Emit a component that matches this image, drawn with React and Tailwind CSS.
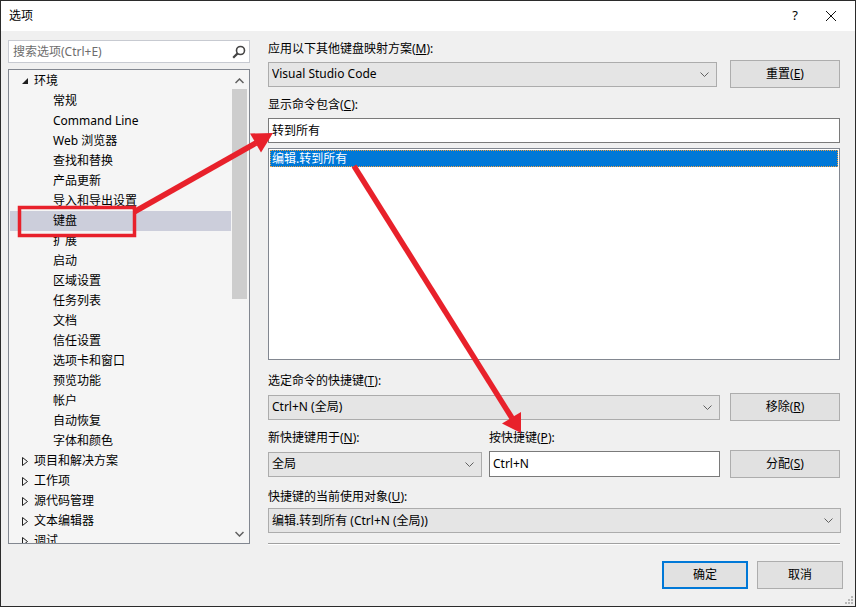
import React from "react";

const treeItems = [
  { label: "环境", level: 0, open: true },
  { label: "常规", level: 1 },
  { label: "Command Line", level: 1 },
  { label: "Web 浏览器", level: 1 },
  { label: "查找和替换", level: 1 },
  { label: "产品更新", level: 1 },
  { label: "导入和导出设置", level: 1 },
  { label: "键盘", level: 1, selected: true },
  { label: "扩展", level: 1 },
  { label: "启动", level: 1 },
  { label: "区域设置", level: 1 },
  { label: "任务列表", level: 1 },
  { label: "文档", level: 1 },
  { label: "信任设置", level: 1 },
  { label: "选项卡和窗口", level: 1 },
  { label: "预览功能", level: 1 },
  { label: "帐户", level: 1 },
  { label: "自动恢复", level: 1 },
  { label: "字体和颜色", level: 1 },
  { label: "项目和解决方案", level: 0 },
  { label: "工作项", level: 0 },
  { label: "源代码管理", level: 0 },
  { label: "文本编辑器", level: 0 },
  { label: "调试", level: 0 },
];

const Chevron = () => (
  <svg width="9" height="5" viewBox="0 0 9 5" className="shrink-0">
    <polyline points="0.5,0.5 4.5,4.5 8.5,0.5" fill="none" stroke="#606060" strokeWidth="1" />
  </svg>
);

const Combo = ({ text, className }) => (
  <div className={`h-[25px] bg-[#e5e5e5] border border-[#acacac] flex items-center pl-[3px] pr-[7px] ${className}`}>
    <span className="flex-1 truncate">{text}</span>
    <Chevron />
  </div>
);

const Button = ({ children, className = "" }) => (
  <div className={`h-[28px] w-[110px] bg-[#e1e1e1] border border-[#adadad] flex items-center justify-center ${className}`}>
    {children}
  </div>
);

const Label = ({ children, className = "" }) => (
  <div className={`h-4 leading-4 ${className}`}>{children}</div>
);

export default function App() {
  return (
    <div
      className="relative w-[856px] h-[607px] bg-[#f0f0f0] border border-[#2b2b2b] flex flex-col text-[12px] text-black overflow-hidden"
      style={{ fontFamily: '"Noto Sans", "Noto Sans CJK SC", sans-serif' }}
    >
      {/* Title bar */}
      <div className="h-[30px] bg-white flex items-center pl-[8px] shrink-0">
        <span className="flex-1 text-[12px]">选项</span>
        <span className="w-[30px] text-center text-[13px] mr-[15px]">?</span>
        <svg width="12" height="12" viewBox="0 0 12 12" className="mr-[18px]">
          <path d="M1 1 L11 11 M11 1 L1 11" stroke="#111" strokeWidth="1" />
        </svg>
      </div>

      <div className="flex flex-1">
        {/* Left */}
        <div className="pl-[7px] pt-[9px] w-[250px] shrink-0">
          <div className="w-[242px] h-[23px] bg-white border border-[#c7cad1] flex items-center pl-[4px] pr-[3px]">
            <span className="flex-1 text-[#6d6d6d]">搜索选项(Ctrl+E)</span>
            <svg width="14" height="14" viewBox="0 0 14 14">
              <circle cx="8.5" cy="5.5" r="4" fill="none" stroke="#444" strokeWidth="1.6" />
              <path d="M5.6 8.4 L1.2 12.8" stroke="#444" strokeWidth="2.2" />
            </svg>
          </div>
          <div className="mt-[6px] w-[242px] h-[475px] bg-[#f5f5f5] border border-[#828790] flex">
            <div className="flex-1 pt-px overflow-hidden">
              {treeItems.map((it) => (
                <div
                  key={it.label}
                  className={`h-5 flex items-center ${it.selected ? "bg-[#cccedb] ml-px" : ""}`}
                >
                  {it.level === 0 ? (
                    <>
                      <span className="w-[25px] flex justify-end pr-[6px]">
                        {it.open ? (
                          <svg width="6" height="6" viewBox="0 0 6 6">
                            <polygon points="6,0 6,6 0,6" fill="#1e1e1e" />
                          </svg>
                        ) : (
                          <svg width="6" height="9" viewBox="0 0 6 9">
                            <polygon points="0.5,0.5 5.5,4.5 0.5,8.5" fill="none" stroke="#1e1e1e" strokeWidth="1" />
                          </svg>
                        )}
                      </span>
                      <span>{it.label}</span>
                    </>
                  ) : (
                    <span className={it.selected ? "pl-[43px]" : "pl-[44px]"}>{it.label}</span>
                  )}
                </div>
              ))}
            </div>
            <div className="w-[17px] mr-px flex flex-col items-center">
              <svg width="9" height="6" viewBox="0 0 9 6" className="mt-[8px]">
                <polyline points="0.5,5 4.5,1 8.5,5" fill="none" stroke="#606060" strokeWidth="1.5" />
              </svg>
              <div className="mt-[5px] w-[15px] h-[210px] bg-[#cdcdcd]" />
              <div className="flex-1" />
              <svg width="9" height="6" viewBox="0 0 9 6" className="mb-[6px]">
                <polyline points="0.5,1 4.5,5 8.5,1" fill="none" stroke="#606060" strokeWidth="1.5" />
              </svg>
            </div>
          </div>
        </div>

        {/* Right */}
        <div className="ml-[17px] pt-[10px] w-[572px]">
          <Label>
            应用以下其他键盘映射方案(<u>M</u>):
          </Label>
          <div className="mt-[3px] h-[28px] flex items-center">
            <Combo text="Visual Studio Code" className="w-[449px]" />
            <Button className="ml-auto">
              重置(<u>E</u>)
            </Button>
          </div>

          <Label className="mt-[9px]">
            显示命令包含(<u>C</u>):
          </Label>
          <div className="mt-[5px] h-[25px] bg-white border border-[#7a7a7a] flex items-center pl-[3px]">
            转到所有
          </div>

          <div className="mt-[5px] h-[212px] bg-white border border-[#828790] p-px">
            <div className="h-[17px] bg-[#0078d7] text-white flex items-center pl-[2px] outline outline-1 outline-dotted outline-[#f0a040] -outline-offset-1">
              编辑.转到所有
            </div>
          </div>

          <Label className="mt-[13px]">
            选定命令的快捷键(<u>T</u>):
          </Label>
          <div className="mt-[4px] h-[28px] flex items-center">
            <Combo text="Ctrl+N (全局)" className="w-[452px]" />
            <Button className="ml-auto">
              移除(<u>R</u>)
            </Button>
          </div>

          <div className="mt-[9px] flex">
            <Label className="w-[221px]">
              新快捷键用于(<u>N</u>):
            </Label>
            <Label>
              按快捷键(<u>P</u>):
            </Label>
          </div>
          <div className="mt-[4px] h-[28px] flex items-center">
            <Combo text="全局" className="w-[214px]" />
            <div className="ml-[7px] w-[231px] h-[26px] bg-white border border-[#7a7a7a] flex items-center pl-[3px]">
              Ctrl+N
            </div>
            <Button className="ml-auto">
              分配(<u>S</u>)
            </Button>
          </div>

          <Label className="mt-[11px]">
            快捷键的当前使用对象(<u>U</u>):
          </Label>
          <Combo text="编辑.转到所有 (Ctrl+N (全局))" className="mt-[3px] w-[573px]" />

          <div className="mt-[10px] h-px bg-[#a0a0a0]" />
          <div className="h-px bg-white" />

          <div className="mt-[16px] flex justify-end gap-[9px] -mr-[3px]">
            <div className="w-[86px] h-[28px] bg-[#e1e1e1] border-2 border-[#0078d7] flex items-center justify-center">
              确定
            </div>
            <div className="w-[86px] h-[28px] bg-[#e1e1e1] border border-[#adadad] flex items-center justify-center">
              取消
            </div>
          </div>
        </div>
      </div>

      {/* resize grip */}
      <svg width="10" height="10" viewBox="0 0 10 10" className="absolute right-[2px] bottom-[2px]">
        {[[8, 0], [8, 3], [5, 3], [8, 6], [5, 6], [2, 6]].map(([x, y]) => (
          <rect key={`${x}-${y}`} x={x} y={y + 2} width="2" height="2" fill="#b8b8b8" />
        ))}
      </svg>

      {/* red annotation */}
      <svg width="856" height="607" viewBox="0 0 856 607" className="absolute left-[-1px] top-[-1px] pointer-events-none">
        <rect x="19.5" y="207.5" width="115" height="28" fill="none" stroke="#e8212b" strokeWidth="3.5" />
        <line x1="134" y1="212" x2="256" y2="143" stroke="#e8212b" strokeWidth="5.5" />
        <polygon points="273,133 261,152.5 250,133.5" fill="#e8212b" />
        <line x1="354" y1="166" x2="512" y2="418" stroke="#e8212b" strokeWidth="5.5" />
        <polygon points="521,433 521,412 502,423.5" fill="#e8212b" />
      </svg>
    </div>
  );
}
